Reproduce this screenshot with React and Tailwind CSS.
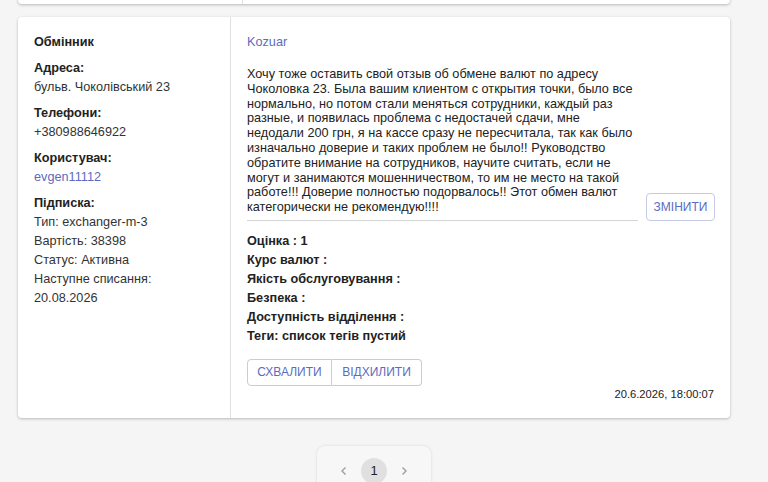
import React from 'react';

const reviewLines = [
  'Хочу тоже оставить свой отзыв об обмене валют по адресу',
  'Чоколовка 23. Была вашим клиентом с открытия точки, было все',
  'нормально, но потом стали меняться сотрудники, каждый раз',
  'разные, и появилась проблема с недостачей сдачи, мне',
  'недодали 200 грн, я на кассе сразу не пересчитала, так как было',
  'изначально доверие и таких проблем не было!! Руководство',
  'обратите внимание на сотрудников, научите считать, если не',
  'могут и занимаются мошенничеством, то им не место на такой',
  'работе!!! Доверие полностью подорвалось!! Этот обмен валют',
  'категорически не рекомендую!!!!',
];

const ratings = ['Оцінка : 1', 'Курс валют :', 'Якість обслуговування :', 'Безпека :', 'Доступність відділення :', 'Теги: список тегів пустий'];

const App = () => {
  return (
    <div className="h-[482px] overflow-hidden bg-[#f5f5f5] pl-[18px] pr-[38px] font-['Liberation_Sans',Arial,sans-serif] text-[12.7px] text-[#333]">
      {/* previous card, only its bottom edge shows */}
      <div className="-mt-[36px] h-[40px] flex bg-white rounded shadow-[0_1px_3px_rgba(0,0,0,0.25)]">
        <div className="w-[225px] border-r border-[#e0e0e0]" />
        <div className="flex-1" />
      </div>

      {/* review card */}
      <div className="mt-[13px] flex bg-white rounded shadow-[0_1px_3px_rgba(0,0,0,0.25)] h-[401px]">
        <div className="w-[213px] shrink-0 border-r border-[#e0e0e0] pl-4 pt-4 leading-[19px] flex flex-col gap-[7px]">
          <div className="font-bold text-[#222]">Обмінник</div>
          <div>
            <div className="font-bold text-[#222]">Адреса:</div>
            <div>бульв. Чоколівський 23</div>
          </div>
          <div>
            <div className="font-bold text-[#222]">Телефони:</div>
            <div>+380988646922</div>
          </div>
          <div>
            <div className="font-bold text-[#222]">Користувач:</div>
            <a href="#" className="text-[#5c6bc0]">evgen11112</a>
          </div>
          <div>
            <div className="font-bold text-[#222]">Підписка:</div>
            <div>Тип: exchanger-m-3</div>
            <div>Вартість: 38398</div>
            <div>Статус: Активна</div>
            <div>Наступне списання:</div>
            <div>20.08.2026</div>
          </div>
        </div>

        <div className="flex-1 pl-4 pr-4 pt-4 flex flex-col">
          <a href="#" className="leading-[19px] text-[#5c6bc0]">Kozuar</a>

          <div className="mt-[15px] flex items-end gap-2">
            <div className="w-[391px] shrink-0 border-b border-[#d4d4d4] pb-[5px] leading-[14.8px] text-[#222]">
              {reviewLines.map((l) => (
                <div key={l} className="whitespace-nowrap">{l}</div>
              ))}
            </div>
            <button className="h-[28px] w-[69px] shrink-0 border border-[#c5cae9] rounded text-[12px] font-medium text-[#5c6bc0] uppercase">
              Змінити
            </button>
          </div>

          <div className="mt-[11px] font-bold text-[#222] leading-[19px]">
            {ratings.map((r) => (
              <div key={r}>{r}</div>
            ))}
          </div>

          <div className="mt-[13px] flex">
            <button className="h-[27px] w-[85px] border border-[#c5cae9] rounded-l text-[12px] font-medium text-[#5c6bc0]">
              СХВАЛИТИ
            </button>
            <button className="h-[27px] w-[90px] border border-l-0 border-[#c5cae9] rounded-r text-[12px] font-medium text-[#5c6bc0]">
              ВІДХИЛИТИ
            </button>
          </div>

          <div className="mt-[1px] pr-[1px] text-right text-[11.2px] leading-[14px] text-[#222]">20.6.2026, 18:00:07</div>
        </div>
      </div>

      {/* pagination */}
      <div className="mt-[28px] flex justify-center">
        <div className="w-[114px] h-[60px] rounded-lg bg-[#f7f7f7] shadow-[0_0_3px_rgba(0,0,0,0.12)] flex items-start justify-center gap-[4px] pt-[12px]">
          <span className="w-[26px] h-[26px] flex items-center justify-center text-[#9e9e9e]">
            <svg width="10" height="10" viewBox="0 0 10 10" fill="none" stroke="currentColor" strokeWidth="1.4">
              <path d="M6.5 1.5 3 5l3.5 3.5" />
            </svg>
          </span>
          <span className="w-[26px] h-[26px] rounded-full bg-[#e0e0e0] flex items-center justify-center text-[13px] text-[#222]">1</span>
          <span className="w-[26px] h-[26px] flex items-center justify-center text-[#9e9e9e]">
            <svg width="10" height="10" viewBox="0 0 10 10" fill="none" stroke="currentColor" strokeWidth="1.4">
              <path d="M3.5 1.5 7 5 3.5 8.5" />
            </svg>
          </span>
        </div>
      </div>
    </div>
  );
};

export default App;
